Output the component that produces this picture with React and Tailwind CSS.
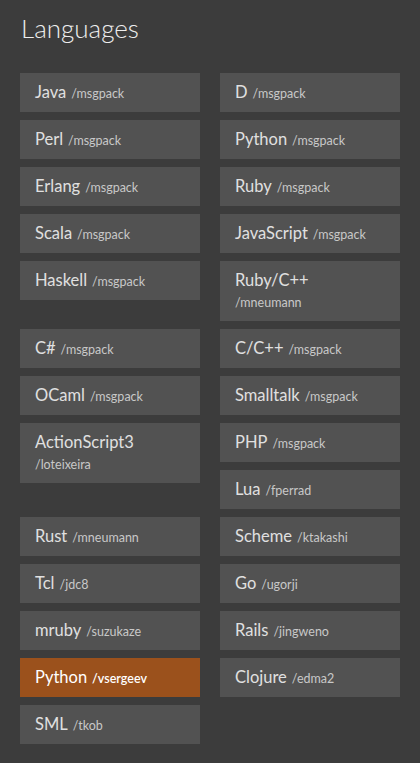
import React from 'react';

const rows = [
  [{ name: 'Java', by: 'msgpack' }, { name: 'D', by: 'msgpack' }],
  [{ name: 'Perl', by: 'msgpack' }, { name: 'Python', by: 'msgpack' }],
  [{ name: 'Erlang', by: 'msgpack' }, { name: 'Ruby', by: 'msgpack' }],
  [{ name: 'Scala', by: 'msgpack' }, { name: 'JavaScript', by: 'msgpack' }],
  [{ name: 'Haskell', by: 'msgpack' }, { name: 'Ruby/C++', by: 'mneumann', wrap: true }],
  [{ name: 'C#', by: 'msgpack' }, { name: 'C/C++', by: 'msgpack' }],
  [{ name: 'OCaml', by: 'msgpack' }, { name: 'Smalltalk', by: 'msgpack' }],
  [
    { name: 'ActionScript3', by: 'loteixeira', wrap: true },
    [{ name: 'PHP', by: 'msgpack' }, { name: 'Lua', by: 'fperrad' }],
  ],
  [{ name: 'Rust', by: 'mneumann' }, { name: 'Scheme', by: 'ktakashi' }],
  [{ name: 'Tcl', by: 'jdc8' }, { name: 'Go', by: 'ugorji' }],
  [{ name: 'mruby', by: 'suzukaze' }, { name: 'Rails', by: 'jingweno' }],
  [{ name: 'Python', by: 'vsergeev', active: true }, { name: 'Clojure', by: 'edma2' }],
  [{ name: 'SML', by: 'tkob' }, null],
];

const LangButton = ({ lang }) => (
  <a
    href="#"
    className={`block px-[15px] py-[9px] text-[16.5px] leading-[21px] ${
      lang.active ? 'bg-[#9b511c] text-white' : 'bg-[#525252] text-[#e0e0e0]'
    }`}
  >
    <span className="font-normal mr-[5px]">{lang.name}</span>
    {lang.wrap && <br />}
    <span
      className={`text-[12.5px] leading-none ${
        lang.active ? 'text-white font-semibold' : 'text-[#c8c8c8]'
      }`}
    >
      /{lang.by}
    </span>
  </a>
);

export default function App() {
  return (
    <div className="min-h-screen bg-[#3c3c3c] px-5 pt-[11px] pb-5 font-['Lato','Noto_Sans',sans-serif]">
      <h1 className="text-[26px] font-light text-[#eeeeee] leading-[34px] ml-px">Languages</h1>

      <div className="mt-[28px] grid grid-cols-2 gap-x-5 gap-y-2 items-start">
        {rows.map((row, i) => (
          <React.Fragment key={i}>
            {row.map((cell, j) =>
              cell === null ? (
                <div key={j} />
              ) : Array.isArray(cell) ? (
                <div key={j} className="flex flex-col gap-2">
                  {cell.map((l) => (
                    <LangButton key={l.name} lang={l} />
                  ))}
                </div>
              ) : (
                <LangButton key={j} lang={cell} />
              )
            )}
          </React.Fragment>
        ))}
      </div>
    </div>
  );
}
